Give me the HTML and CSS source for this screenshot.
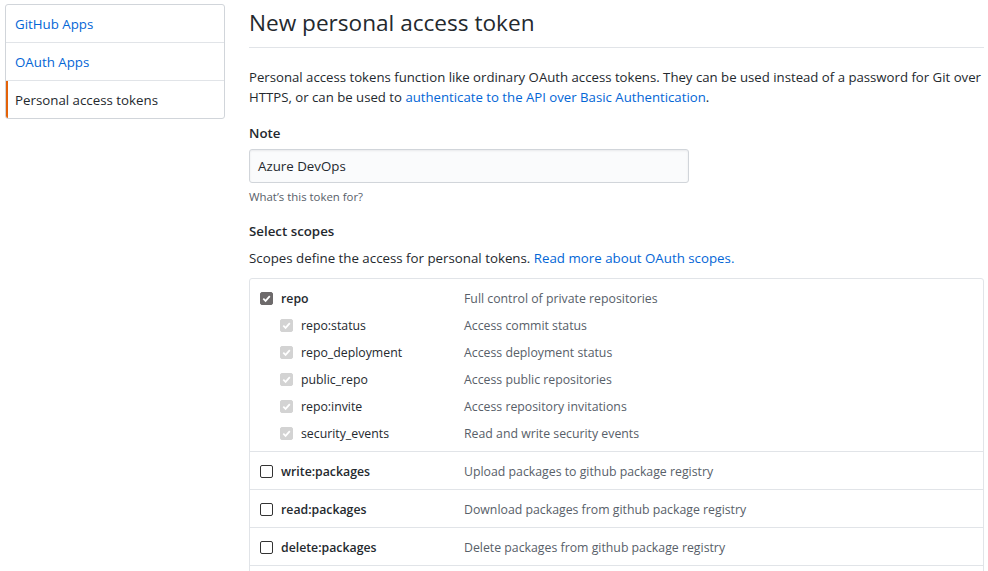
FILE: index.html
```html
<!DOCTYPE html>
<html>
<head>
<meta charset="utf-8">
<link rel="stylesheet" href="styles.css">
</head>
<body>
<div class="page">
  <nav class="menu">
    <a class="menu-item">GitHub Apps</a>
    <a class="menu-item">OAuth Apps</a>
    <a class="menu-item selected">Personal access tokens</a>
  </nav>
  <main class="main">
    <h1 class="title">New personal access token</h1>
    <p class="intro">Personal access tokens function like ordinary OAuth access tokens. They can be used instead of a password for Git over HTTPS, or can be used to <a class="link">authenticate to the API over Basic Authentication</a>.</p>
    <div class="label">Note</div>
    <div class="input">Azure DevOps</div>
    <div class="hint">What’s this token for?</div>
    <div class="label scopes-label">Select scopes</div>
    <p class="scopes-text">Scopes define the access for personal tokens. <a class="link">Read more about OAuth scopes.</a></p>
    <div class="scopes">
      <div class="group">
        <div class="row parent">
          <span class="cb checked"><svg viewBox="0 0 12 12"><path d="M2.5 6.2 L5 8.6 L9.6 3.4" fill="none" stroke="#fff" stroke-width="1.9"/></svg></span>
          <span class="name">repo</span>
          <span class="desc">Full control of private repositories</span>
        </div>
        <div class="row child">
          <span class="cb disabled"><svg viewBox="0 0 12 12"><path d="M2.5 6.2 L5 8.6 L9.6 3.4" fill="none" stroke="#fff" stroke-width="1.9"/></svg></span>
          <span class="name">repo:status</span>
          <span class="desc">Access commit status</span>
        </div>
        <div class="row child">
          <span class="cb disabled"><svg viewBox="0 0 12 12"><path d="M2.5 6.2 L5 8.6 L9.6 3.4" fill="none" stroke="#fff" stroke-width="1.9"/></svg></span>
          <span class="name">repo_deployment</span>
          <span class="desc">Access deployment status</span>
        </div>
        <div class="row child">
          <span class="cb disabled"><svg viewBox="0 0 12 12"><path d="M2.5 6.2 L5 8.6 L9.6 3.4" fill="none" stroke="#fff" stroke-width="1.9"/></svg></span>
          <span class="name">public_repo</span>
          <span class="desc">Access public repositories</span>
        </div>
        <div class="row child">
          <span class="cb disabled"><svg viewBox="0 0 12 12"><path d="M2.5 6.2 L5 8.6 L9.6 3.4" fill="none" stroke="#fff" stroke-width="1.9"/></svg></span>
          <span class="name">repo:invite</span>
          <span class="desc">Access repository invitations</span>
        </div>
        <div class="row child">
          <span class="cb disabled"><svg viewBox="0 0 12 12"><path d="M2.5 6.2 L5 8.6 L9.6 3.4" fill="none" stroke="#fff" stroke-width="1.9"/></svg></span>
          <span class="name">security_events</span>
          <span class="desc">Read and write security events</span>
        </div>
      </div>
      <div class="group">
        <div class="row parent">
          <span class="cb"></span>
          <span class="name">write:packages</span>
          <span class="desc">Upload packages to github package registry</span>
        </div>
      </div>
      <div class="group">
        <div class="row parent">
          <span class="cb"></span>
          <span class="name">read:packages</span>
          <span class="desc">Download packages from github package registry</span>
        </div>
      </div>
      <div class="group">
        <div class="row parent">
          <span class="cb"></span>
          <span class="name">delete:packages</span>
          <span class="desc">Delete packages from github package registry</span>
        </div>
      </div>
      <div class="group">
        <div class="row parent">
          <span class="cb"></span>
          <span class="name">admin:org</span>
          <span class="desc">Full control of orgs and teams, read and write org projects</span>
        </div>
      </div>
    </div>
  </main>
</div>
</body>
</html>
```
FILE: styles.css
```css
* { box-sizing: border-box; }
html, body { margin: 0; padding: 0; background: #fff; }
body {
  font-family: "Open Sans", "Noto Sans", sans-serif;
  font-size: 13.3px;
  color: #24292e;
  overflow: hidden;
}
.page {
  display: flex;
  gap: 24px;
  padding: 4px 4px 0 5px;
}
.menu {
  width: 220px;
  flex: none;
  align-self: flex-start;
  border: 1px solid #d1d5da;
  border-radius: 3px;
  display: flex;
  flex-direction: column;
}
.menu-item {
  display: block;
  height: 38px;
  line-height: 39px;
  padding: 0 9px;
  color: #0366d6;
  border-bottom: 1px solid #e1e4e8;
}
.menu-item:last-child { border-bottom: 0; height: 37px; }
.menu-item.selected {
  color: #24292e;
  border-left: 2px solid #e36209;
  padding-left: 7px;
  border-bottom-left-radius: 2px;
}
.main {
  flex: 1;
  min-width: 0;
}
.title {
  margin: 0;
  font-size: 22.6px;
  font-weight: 400;
  line-height: 30px;
  padding: 4px 0 9px;
  border-bottom: 1px solid #e1e4e8;
}
.intro {
  margin: 19px 0 0;
  line-height: 20px;
  font-size: 13.2px;
}
.link { color: #0366d6; }
.label {
  font-weight: 600;
  margin-top: 16px;
  line-height: 20px;
}
.input {
  margin-top: 6px;
  width: 440px;
  height: 34px;
  line-height: 32px;
  padding: 0 8px;
  background: #fafbfc;
  border: 1px solid #d1d5da;
  border-radius: 3px;
  box-shadow: inset 0 1px 2px rgba(27,31,35,0.075);
}
.hint {
  font-size: 11.4px;
  color: #586069;
  margin-top: 6px;
  line-height: 16px;
}
.scopes-label { margin-top: 16px; }
.scopes-text {
  margin: 7px 0 0;
  line-height: 20px;
}
.scopes {
  margin-top: 10px;
  border: 1px solid #e1e4e8;
  border-radius: 3px;
  font-size: 12.3px;
}
.group {
  padding: 9px 10px 8px;
  border-bottom: 1px solid #e1e4e8;
}
.group:first-child { padding-bottom: 4px; }
.row {
  display: flex;
  align-items: center;
  height: 20px;
}
.row.child {
  height: 27px;
  padding-left: 20px;
}
.row.parent + .row.child { margin-top: 4px; }
.cb {
  flex: none;
  width: 13px;
  height: 13px;
  border: 1px solid #333;
  border-radius: 2px;
  background: #fff;
  margin-right: 8px;
  display: flex;
}
.cb svg { width: 11px; height: 11px; }
.cb.checked { background: #6d6a6b; border-color: #6d6a6b; }
.cb.disabled { background: #d3d3d3; border-color: #d3d3d3; }
.name { width: 183px; flex: none; }
.parent .name { font-weight: 600; }
.child .name { width: 163px; }
.desc { color: #586069; }
```
